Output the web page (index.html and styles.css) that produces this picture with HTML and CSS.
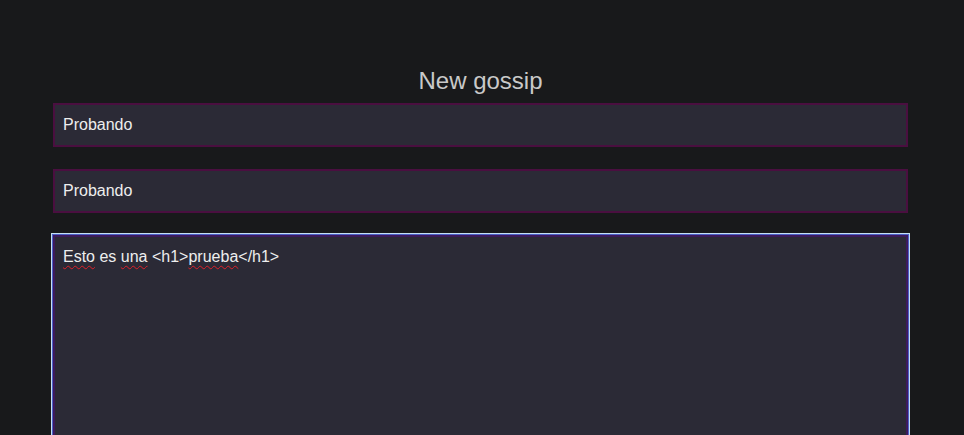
FILE: index.html
```html
<!DOCTYPE html>
<html lang="es">
<head>
<meta charset="utf-8">
<title>New gossip</title>
<link rel="stylesheet" href="styles.css">
</head>
<body>
<main class="form">
  <h2 class="title">New gossip</h2>
  <input class="field" type="text" value="Probando">
  <input class="field" type="text" value="Probando">
  <div class="area" role="textbox" aria-multiline="true"><span class="sp">Esto</span> es <span class="sp">una</span> &lt;h1&gt;<span class="sp">prueba</span>&lt;/h1&gt;</div>
</main>
</body>
</html>
```
FILE: styles.css
```css
html, body {
  margin: 0;
  padding: 0;
  background: #18191b;
  height: 100%;
  overflow: hidden;
}
body {
  font-family: "Liberation Sans", Arial, sans-serif;
}
.form {
  display: flex;
  flex-direction: column;
  gap: 22px;
  margin: 0 56px 0 53px;
  padding-top: 67px;
}
.title {
  margin: 0 0 -14px 0;
  font-weight: normal;
  font-size: 24px;
  line-height: 28px;
  color: #c9c9c9;
  text-align: center;
}
.field {
  box-sizing: border-box;
  height: 44px;
  margin: 0;
  padding: 0 8px;
  background: #2b2a36;
  border: 2px solid #4a0f40;
  color: #eeeeee;
  font-family: "Liberation Sans", Arial, sans-serif;
  font-size: 16px;
  outline: none;
}
.area {
  box-sizing: border-box;
  height: 300px;
  padding: 11px 8px;
  background: #2b2a36;
  border: 2px solid #3d1a5c;
  color: #eeeeee;
  font-size: 16px;
  line-height: 18px;
  box-shadow: 0 0 0 1px #4d5fc8, 0 0 0 2px #c4dff2;
}
.sp {
  text-decoration: underline wavy #e0202a;
  text-decoration-thickness: 1px;
  text-underline-offset: 3px;
}
```
